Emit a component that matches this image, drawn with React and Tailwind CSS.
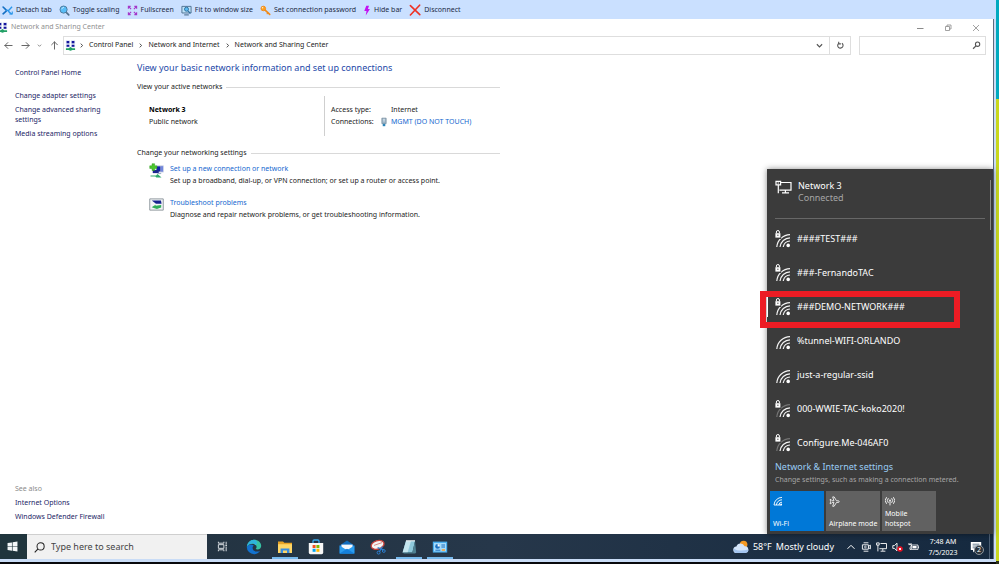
import React from "react";

function Icon({ box = "0 0 12 12", className = "", children }) {
  return (
    <svg viewBox={box} className={`shrink-0 ${className}`} fill="none" aria-hidden="true">
      {children}
    </svg>
  );
}

/* ---------- remote-session toolbar ---------- */

const DetachIcon = () => (
  <Icon className="size-[11px]">
    <path d="M1.2 2.2 4.4 5.4M1.2 9.6 4.6 6.6" stroke="#1670c4" strokeWidth="1.8" strokeLinecap="round" />
    <path d="M4.4 5.6 7.2 6 11 2M6.4 6.4 10.6 10" stroke="#2a96ea" strokeWidth="1.5" />
    <path d="M8 9.8h3.2V7" stroke="#2a96ea" strokeWidth="1.2" />
  </Icon>
);
const ScaleIcon = () => (
  <Icon className="size-[11px]">
    <path d="m7.6 7.8 3 3" stroke="#53708c" strokeWidth="1.8" strokeLinecap="round" />
    <circle cx="5" cy="5" r="3.9" fill="#58bdf7" stroke="#4b7799" />
    <path d="M3 4.6A2.4 2.4 0 0 1 5.400 2.600" stroke="#c6eaff" />
  </Icon>
);
const FullIcon = () => (
  <Icon className="size-[11px]">
    <path
      d="M1.500 4V1.500H4M1.500 1.500l3 3M8 1.500h2.500V4M10.500 1.500l-3 3M1.500 8v2.500H4M1.500 10.500l3-3M8 10.500h2.500V8M10.500 10.500l-3-3"
      stroke="#a436c9"
      strokeWidth="1.2"
    />
  </Icon>
);
const FitIcon = () => (
  <Icon className="size-[11px]">
    <path d="M1 1.500h10v7.200H1z" fill="#bfe3f8" stroke="#4b6f8e" />
    <path d="M3.500 10.800h5" stroke="#4b6f8e" strokeWidth="1.2" />
    <circle cx="6" cy="4.600" r="2.200" fill="#5bbcf2" stroke="#2d6c9c" />
    <path d="m7.600 6.300 2.600 2.900" stroke="#2d6c9c" strokeWidth="1.3" />
  </Icon>
);
const KeyIcon = () => (
  <Icon className="size-[11px]">
    <path d="m5 5 5.600 5.200" stroke="#ef8a1a" strokeWidth="1.8" strokeLinecap="round" />
    <path d="m8.600 8.600-1.200 1.300" stroke="#ef8a1a" strokeWidth="1.1" />
    <circle cx="3.600" cy="3.800" r="2.500" fill="#ff9f1e" stroke="#ef8a1a" />
    <circle cx="2.800" cy="3" r=".8" fill="#fff2d6" />
  </Icon>
);
const BoltIcon = () => (
  <Icon box="0 0 8 12" className="h-[11px] w-[8px]">
    <path d="M3.200.8h3L5 4.400h2.200L2.600 11.400l.9-4.800H1z" fill="#c312f2" />
  </Icon>
);
const CrossIcon = () => (
  <Icon className="size-[12px]">
    <path d="m1.400 1.600 9.400 9M10.600 1.200 1.400 11" stroke="#ee3124" strokeWidth="1.6" strokeLinecap="round" />
  </Icon>
);

const tools = [
  { label: "Detach tab", Glyph: DetachIcon },
  { label: "Toggle scaling", Glyph: ScaleIcon },
  { label: "Fullscreen", Glyph: FullIcon },
  { label: "Fit to window size", Glyph: FitIcon },
  { label: "Set connection password", Glyph: KeyIcon },
  { label: "Hide bar", Glyph: BoltIcon },
  { label: "Disconnect", Glyph: CrossIcon },
];

function SessionBar() {
  return (
    <header className="flex h-[19px] shrink-0 items-center gap-[7px] bg-[#cae0ff] pt-px pl-[2px]">
      {tools.map(({ label, Glyph }) => (
        <button key={label} type="button" className="flex items-center gap-[3px] whitespace-nowrap text-[#1c2b45]">
          <Glyph />
          {label}
        </button>
      ))}
    </header>
  );
}

/* ---------- control panel window ---------- */

const NetIcon = ({ className = "" }) => (
  <Icon className={`size-[11px] ${className}`}>
    <path d="M1 .6h4.400v3.600H1zM6.600.6H11v3.600H6.600zM1 4.800h4.400v3H1zM6.600 4.800H11v3H6.600z" fill="#c9d3ee" />
    <path d="M1.800 1h2.800v2.600H1.800zM7.400 1h2.800v2.600H7.400zM1.800 5.200h2.800v2.200H1.800zM7.400 5.200h2.800v2.200H7.400z" fill="#14149c" />
    <path d="M6 7.600 8 9h3v1.800H8.200L6 11.800l-2.200-1H1V9h3z" fill="#22a066" />
  </Icon>
);

const line = { strokeWidth: 1.1, strokeLinecap: "round", strokeLinejoin: "round" };

function TitleBar() {
  return (
    <div className="flex h-[17px] shrink-0 items-center pr-[13px] text-[#8f8f8f]">
      <NetIcon className="-ml-[3px]" />
      <span className="ml-[3px] flex-1">Network and Sharing Center</span>
      <div className="flex items-center gap-[20px]">
        <button type="button" aria-label="Minimize">
          <Icon box="0 0 8 8" className="size-[8px]"><path d="M1 4.500h6.500" stroke="#8a8a8a" /></Icon>
        </button>
        <button type="button" aria-label="Restore">
          <Icon box="0 0 8 8" className="size-[8px]"><path d="M1.500 2.500h4v4h-4zM3 2.500V1h4v4H5.500" stroke="#8a8a8a" strokeWidth=".8" /></Icon>
        </button>
        <button type="button" aria-label="Close">
          <Icon box="0 0 8 8" className="size-[8px]"><path d="m1 1 6 6M7 1 1 7" stroke="#8a8a8a" strokeWidth=".8" /></Icon>
        </button>
      </div>
    </div>
  );
}

function NavButton({ label, d }) {
  return (
    <button type="button" aria-label={label}>
      <Icon box="0 0 10 10" className="size-[9px]"><path d={d} stroke="#666" {...line} /></Icon>
    </button>
  );
}

const Chevron = () => (
  <Icon box="0 0 6 6" className="size-[5px]"><path d="m2 .8 2.400 2.200L2 5.200" stroke="#444" strokeWidth="1.1" /></Icon>
);

function AddressBar() {
  return (
    <div className="flex h-[19px] shrink-0 items-stretch pr-[7px] text-[#222]">
      <div className="flex w-[63px] shrink-0 items-center justify-between px-[4px]">
        <NavButton label="Back" d="M9 5H1M4.200 1.800 1 5l3.200 3.200" />
        <NavButton label="Forward" d="M1 5h8M5.800 1.800 9 5 5.800 8.200" />
        <button type="button" aria-label="Recent locations">
          <Icon box="0 0 6 6" className="size-[5px]"><path d="m1 2 2 2 2-2" stroke="#777" /></Icon>
        </button>
        <NavButton label="Up" d="M5 9V1M1.800 4.200 5 1l3.200 3.200" />
      </div>
      <div className="flex flex-1 items-center border border-[#dedede]">
        <NetIcon className="ml-px" />
        <nav className="ml-[3px] flex flex-1 items-center gap-[5px] whitespace-nowrap">
          <Chevron />
          <a href="#control-panel">Control Panel</a>
          <Chevron />
          <a href="#network">Network and Internet</a>
          <Chevron />
          <a href="#sharing">Network and Sharing Center</a>
        </nav>
        <button type="button" aria-label="Previous locations" className="mr-[6px]">
          <Icon box="0 0 8 8" className="size-[7px]"><path d="m1 2.600 3 3 3-3" stroke="#555" strokeWidth="1.3" /></Icon>
        </button>
        <button type="button" aria-label="Refresh" className="flex w-[21px] items-center justify-center self-stretch border-l border-[#dedede]">
          <Icon box="0 0 10 10" className="size-[9px]"><path d="M3 2.600a3 3 0 1 0 3.600-.1M3 .8v2.400h2.400" stroke="#555" strokeWidth="1.2" /></Icon>
        </button>
      </div>
      <label className="ml-[8px] flex w-[127px] items-center border border-[#dedede] px-[4px]">
        <input type="text" aria-label="Search Control Panel" className="w-0 flex-1 outline-none" />
        <Icon box="0 0 10 10" className="size-[9px]">
          <circle cx="6.200" cy="3.600" r="2.400" stroke="#555" strokeWidth="1.2" />
          <path d="M4.400 5.400 1.200 8.600" stroke="#555" strokeWidth="1.4" />
        </Icon>
      </label>
    </div>
  );
}

function Sidebar() {
  return (
    <aside className="flex w-[137px] shrink-0 flex-col pt-[13px] pr-[20px] pb-[12px] pl-[15px] text-[#1b2566]">
      <a href="#home" className="leading-[10px]">Control Panel Home</a>
      <a href="#adapter" className="mt-[13px] leading-[10px]">Change adapter settings</a>
      <a href="#advanced" className="mt-[4px] leading-[10px]">Change advanced sharing settings</a>
      <a href="#media" className="mt-[4px] leading-[10px]">Media streaming options</a>
      <div className="mt-auto flex flex-col gap-[4px] leading-[10px]">
        <span className="text-[#8a8a8a]">See also</span>
        <a href="#options">Internet Options</a>
        <a href="#firewall">Windows Defender Firewall</a>
      </div>
    </aside>
  );
}

function SectionTitle({ children }) {
  return (
    <h2 className="flex items-center gap-[4px] leading-[10px] text-[#222]">
      {children}
      <span className="h-px flex-1 bg-[#d9d9d9]" />
    </h2>
  );
}

const AddConnectionIcon = () => (
  <Icon box="0 0 16 16" className="size-[15px]">
    <path d="M8 2.600h7.600v7.400H8z" fill="#b9c3dc" />
    <path d="M8 3.600h4.200v5.400H8z" fill="#1223a8" />
    <path d="M12.800 3.400h2.200v5.800h-2.200z" fill="#7086dd" />
    <path d="M4 7.400h6.400v3.400H4z" fill="#1a2690" />
    <path d="M3.200.8h2.800v2.200h2.400v2.800H6V8H3.200V5.800H.8V3h2.400z" fill="#4cc72e" stroke="#2a981c" strokeWidth=".5" />
    <path d="M1.600 13.200h6L9 11.800l4.400 3.600H7.800l-1-1H1.600z" fill="#2ca86a" />
    <path d="M9 11.200h4" stroke="#9fb0c4" strokeWidth="1.2" />
  </Icon>
);
const TroubleshootIcon = () => (
  <Icon box="0 0 16 16" className="size-[15px]">
    <path d="M.8 2h14.400v12H.8z" fill="#f2f4f6" stroke="#8d959c" />
    <path d="M3 3.800h9.800l.6 3.400H7.400z" fill="#17238f" />
    <path d="M2.800 10.800 7 8.200v1.200l6-.8v2.600l-4.600 1.600z" fill="#2fae58" />
  </Icon>
);

const tasks = [
  {
    title: "Set up a new connection or network",
    text: "Set up a broadband, dial-up, or VPN connection; or set up a router or access point.",
    Glyph: AddConnectionIcon,
  },
  {
    title: "Troubleshoot problems",
    text: "Diagnose and repair network problems, or get troubleshooting information.",
    Glyph: TroubleshootIcon,
  },
];

function MainContent() {
  return (
    <main className="w-[363px] pt-[6px] text-[#222]">
      <h1 className="text-[9px] leading-[13px] whitespace-nowrap text-[#1d49a8]">
        View your basic network information and set up connections
      </h1>
      <div className="mt-[8px]"><SectionTitle>View your active networks</SectionTitle></div>
      <div className="mt-[4px] flex h-[40px] pl-[12px]">
        <div className="flex-1 pt-[8px] leading-[12px]">
          <p className="font-bold text-black">Network 3</p>
          <p>Public network</p>
        </div>
        <dl className="grid w-[176px] grid-cols-[60px_1fr] content-start border-l border-[#cfcfcf] pt-[8px] pl-[6px] leading-[12px]">
          <dt>Access type:</dt>
          <dd>Internet</dd>
          <dt className="flex items-center justify-between pr-[4px]">
            Connections:
            <Icon box="0 0 7 11" className="h-[10px] w-[6px]">
              <path d="M1 1h5v6.400H1z" fill="#9db4c6" stroke="#71889a" strokeWidth=".8" />
              <path d="M2.200 2.400h2.600M2.200 4.200h2.600" stroke="#e8f2f8" strokeWidth=".8" />
              <path d="M2 7.600h3v2.800H2z" fill="#2b83b8" />
            </Icon>
          </dt>
          <dd><a href="#mgmt" className="text-[#1568cf]">MGMT (DO NOT TOUCH)</a></dd>
        </dl>
      </div>
      <div className="mt-[12px]"><SectionTitle>Change your networking settings</SectionTitle></div>
      <ul className="mt-[5px] flex flex-col gap-[10px] pl-[12px]">
        {tasks.map(({ title, text, Glyph }) => (
          <li key={title} className="flex gap-[6px]">
            <Glyph />
            <div className="leading-[12px] whitespace-nowrap">
              <a href="#task" className="block text-[#1568cf]">{title}</a>
              <p>{text}</p>
            </div>
          </li>
        ))}
      </ul>
    </main>
  );
}

/* ---------- network flyout ---------- */

const Lock = () => (
  <>
    <path d="M-1-1h7.200v10H-1z" fill="#3b3b3b" />
    <path d="M.4 3.200h5v4.400h-5z" fill="#fff" />
    <path d="M1.400 3.200V2a1.500 1.500 0 0 1 3 0v1.200" stroke="#fff" />
    <path d="M2.900 4.600v1.400" stroke="#3b3b3b" strokeWidth=".9" />
  </>
);

function WifiSignal({ locked, weak }) {
  return (
    <Icon box="0 0 16 18" className="h-[18px] w-[16px]">
      <g strokeWidth="1.200">
        <path d="M1.800 17A13.400 13.400 0 0 1 15 4.600" stroke={weak ? "#757575" : "#f4f4f4"} />
        <path d="M5 17A10.400 10.400 0 0 1 15 7.800" stroke="#f4f4f4" />
        <path d="M8.200 17A7.200 7.200 0 0 1 15 11" stroke="#f4f4f4" />
      </g>
      <circle cx="13.200" cy="15.400" r="1.800" fill="#fff" />
      {locked && <Lock />}
    </Icon>
  );
}

const networks = [
  { name: "####TEST###", locked: true },
  { name: "###-FernandoTAC", locked: true },
  { name: "###DEMO-NETWORK###", locked: true, marked: true },
  { name: "%tunnel-WIFI-ORLANDO" },
  { name: "just-a-regular-ssid" },
  { name: "000-WWIE-TAC-koko2020!", locked: true, weak: true },
  { name: "Configure.Me-046AF0", locked: true, weak: true },
];

function Tile({ label, active, children }) {
  return (
    <button
      type="button"
      aria-pressed={active}
      className={`flex h-[40px] w-[54px] flex-col items-start justify-between pt-[5px] pb-[2px] pl-[3px] text-left text-[7px] leading-[10px] text-white ${active ? "bg-[#0078d7]" : "bg-[#616161]"}`}
    >
      {children}
      <span className="whitespace-pre">{label}</span>
    </button>
  );
}

function NetworkFlyout() {
  return (
    <section
      aria-label="Networks"
      className="absolute right-0 bottom-0 flex w-[226px] flex-col bg-[#3b3b3b] text-[9px] text-white shadow-[0_0_6px_rgba(0,0,0,0.45)]"
    >
      <span className="absolute top-[11px] right-[2px] h-[50px] w-px bg-[#8a8a8a]" />
      <div className="mx-[8px] flex h-[50px] gap-[6px] border-b border-[#676767] pt-[11px]">
        <Icon box="0 0 17 14" className="h-[14px] w-[17px]">
          <path d="M6 2.500h10v7.600H4.400" stroke="#fff" strokeWidth="1.200" />
          <path d="M10.400 10v2.600M7 12.900h7" stroke="#fff" strokeWidth="1.200" />
          <path d="M1 1.400h4.600v3.400H1z" stroke="#fff" strokeWidth="1.200" />
          <path d="M3.300 4.800v8.400" stroke="#fff" strokeWidth="1.200" />
          <path d="M2.600 3h1.400" stroke="#fff" />
        </Icon>
        <div className="leading-[12px]">
          <p>Network 3</p>
          <p className="text-[#a6a6a6]">Connected</p>
        </div>
      </div>
      <ul className="mt-[3px]">
        {networks.map((n) => (
          <li key={n.name} className="relative">
            <button type="button" className="flex h-[34px] w-full items-center gap-[6px] pl-[8px]">
              <WifiSignal locked={n.locked} weak={n.weak} />
              {n.name}
            </button>
            {n.marked && (
              <>
                <span className="absolute top-[7px] left-0 h-[20px] w-px bg-white" />
                <span className="absolute top-px -bottom-1 -left-[7px] w-[200px] border-[6px] border-[#ed1c24]" />
              </>
            )}
          </li>
        ))}
      </ul>
      <div className="pl-[8px]">
        <a href="#settings" className="block leading-[14px] text-[#99ccf5]">Network &amp; Internet settings</a>
        <p className="text-[7px] leading-[11px] whitespace-nowrap text-[#a6a6a6]">
          Change settings, such as making a connection metered.
        </p>
      </div>
      <div className="flex gap-[2px] pt-[6px] pb-[3px] pl-[3px]">
        <Tile label="Wi-Fi" active>
          <Icon box="0 0 10 10" className="size-[10px]">
            <path d="M1 9a8 8 0 0 1 8-7.600M3.400 9A5.600 5.600 0 0 1 9 3.800M5.800 9A3.200 3.200 0 0 1 9 6.200M1 9h7.600" stroke="#fff" strokeWidth=".9" />
            <circle cx="8.200" cy="8.400" r=".9" fill="#fff" />
          </Icon>
        </Tile>
        <Tile label="Airplane mode">
          <Icon className="size-[11px]">
            <path
              d="M1.200 3.800h1l1.200 1.400h2L4 1h1.600l2.600 4.200h2a.9.9 0 0 1 0 1.800h-2l-2.600 4.200H4L5.400 7h-2L2.200 8.400h-1l.6-2.300z"
              stroke="#fff"
              strokeWidth=".9"
            />
          </Icon>
        </Tile>
        <Tile label={"Mobile\nhotspot"}>
          <Icon box="0 0 10 10" className="size-[10px]">
            <path d="M1.600 1.200a5 5 0 0 0 0 6.600M3.400 2.200a3.400 3.400 0 0 0 0 4.600M8.400 1.200a5 5 0 0 1 0 6.600M6.600 2.200a3.400 3.400 0 0 1 0 4.600M5 4.400V9.400" stroke="#fff" strokeWidth=".9" />
            <circle cx="5" cy="4.400" r=".8" fill="#fff" />
          </Icon>
        </Tile>
      </div>
    </section>
  );
}

/* ---------- taskbar ---------- */

const apps = [
  {
    label: "Microsoft Edge",
    art: (
      <>
        <path d="M8 .8A7.200 7.200 0 0 0 .8 8c2-4 7.600-4.400 9.400-1.400.9 1.600 0 2.800-.6 3.400 3 1.200 5.600-.4 5.600-3C15.200 3.400 12 .8 8 .8z" fill="#36c2a4" />
        <path d="M8 .8A7.200 7.200 0 0 0 .8 8c2-4 7-4.400 9-1.800C12 4 11 1.400 8 .8z" fill="#2fb3dc" />
        <path d="M.8 8A7.200 7.200 0 0 0 8 15.200c2.600 0 4.800-1.200 6-3.200-3 1.400-7.400.4-7.400-3 0-1.200.6-2 1.200-2.400C5 4.400 1.800 5.400.8 8z" fill="#1272cf" />
      </>
    ),
  },
  {
    label: "File Explorer",
    running: true,
    art: (
      <>
        <path d="M1 2.400h5l1.400 1.400H15v10.200H1z" fill="#e8a325" />
        <path d="M1 5.200h14v8.800H1z" fill="#ffd666" />
        <path d="M3.600 14V9.400h8.800V14H10v-2.400H6V14z" fill="#3a8ee0" />
      </>
    ),
  },
  {
    label: "Microsoft Store",
    art: (
      <>
        <path d="M5 4V2.200A1.200 1.200 0 0 1 6.200 1h3.600A1.200 1.200 0 0 1 11 2.200V4" stroke="#38a9ea" strokeWidth="1.3" />
        <path d="M.8 4h14.400v9.600a1.600 1.600 0 0 1-1.600 1.600H2.400A1.600 1.600 0 0 1 .8 13.600z" fill="#f7f7f7" />
        <path d="M4.600 6h3v3h-3z" fill="#f25022" />
        <path d="M8.400 6h3v3h-3z" fill="#7fba00" />
        <path d="M4.600 9.800h3v3h-3z" fill="#00a4ef" />
        <path d="M8.400 9.800h3v3h-3z" fill="#ffb900" />
      </>
    ),
  },
  {
    label: "Mail",
    art: (
      <>
        <path d="M.6 6.400 8 1.400l7.400 5v8H.6z" fill="#0f6cbd" />
        <path d="M2.400 5.600h11.200v5H2.400z" fill="#f3f8fc" />
        <path d="M.6 6.400 8 11.200l7.400-4.800v8H.6z" fill="#2b9df0" />
        <path d="M.6 14.400 8 9.800l7.400 4.600z" fill="#1580dc" />
      </>
    ),
  },
  {
    label: "Snipping Tool",
    art: (
      <>
        <ellipse cx="7.600" cy="5.800" rx="6.600" ry="4.200" fill="#f4f4f4" stroke="#c8423c" strokeWidth="1.300" transform="rotate(-18 7.600 5.800)" />
        <path d="m4 6.400 8-2.800" stroke="#d98a86" />
        <path d="M7.600 8.600 14 11M12.400 7.600 9.200 13" stroke="#2d7fd0" strokeWidth="1.200" />
        <circle cx="8.600" cy="13.600" r="1.500" stroke="#2d7fd0" />
        <circle cx="13.800" cy="12" r="1.400" stroke="#2d7fd0" />
      </>
    ),
  },
  {
    label: "Notepad",
    running: true,
    art: (
      <>
        <path d="M5 2h9l-2.600 11.400H1.600z" fill="#8ec9dc" />
        <path d="M5 2h5L6.600 13.400h-5z" fill="#c5e6ef" />
        <path d="M11.400 13.400 14 2l1.200 11.400-1 1H3l-1.400-1z" fill="#4f8192" />
        <path d="M5 1.800h9" stroke="#e8eef0" strokeWidth="1.200" />
      </>
    ),
  },
  {
    label: "Control Panel",
    running: true,
    art: (
      <>
        <path d="M.8 2.600h14.400v11H.8z" fill="#49aef0" />
        <path d="M2 4h12v8.400H2z" fill="#a5dbfb" />
        <circle cx="5.600" cy="7.400" r="2.400" fill="#1c6fc0" />
        <path d="M5.600 7.400V5A2.400 2.400 0 0 1 8 7.400z" fill="#fff" />
        <path d="M9.400 6H13M9.400 8H13" stroke="#1c6fc0" />
        <path d="M3.400 11.200h5" stroke="#1c6fc0" />
        <path d="M9.800 10.200H13v1.600H9.800z" fill="#f5a23a" />
      </>
    ),
  },
];

function Taskbar() {
  return (
    <footer className="flex h-[25px] shrink-0 items-stretch bg-linear-to-r from-[#22323d] via-[#26374a] to-[#15293f] text-white">
      <button type="button" aria-label="Start" className="flex w-[27px] items-center justify-center bg-[#20353d] pr-[3px]">
        <Icon className="size-[11px]">
          <path d="M.6 2.200 5.400 1.500v4.200H.6zM6.100 1.400 11.400.6v5.100H6.100zM.6 6.400h4.800v4.200L.6 9.900zM6.100 6.400h5.300v5.100l-5.300-.8z" fill="#f4f8fa" />
        </Icon>
      </button>
      <label className="flex w-[180px] items-center gap-[6px] border-t border-[#cfcfcf] bg-[#f1f1f1] pl-[7px]">
        <Icon className="size-[11px]">
          <circle cx="7.200" cy="4.800" r="3.900" stroke="#222" strokeWidth="1.100" />
          <path d="M4.400 7.600.8 11.400" stroke="#222" strokeWidth="1.200" />
        </Icon>
        <input
          type="text"
          aria-label="Search"
          placeholder="Type here to search"
          className="w-0 flex-1 text-[9px] outline-none placeholder:text-[#444]"
        />
      </label>
      <div className="flex items-stretch pl-[3px]">
        <button type="button" aria-label="Task view" className="flex w-[25px] items-center justify-center">
          <Icon className="size-[11px]">
            <path d="M1.500.8v1.600h6V.8M1.500 4h6v4h-6zM1.500 11.200V9.600h6v1.600M10 .8v3M10 6.400v4.800" stroke="#e6eaee" />
            <path d="M9.200 4.200h1.600v1.600H9.200z" fill="#e6eaee" />
          </Icon>
        </button>
        <div className="ml-[6px] flex gap-[5px]">
          {apps.map(({ label, running, art }) => (
            <button
              key={label}
              type="button"
              aria-label={label}
              className={`flex w-[26px] items-center justify-center border-b-2 pt-[2px] ${running ? "border-[#76b9ed]" : "border-transparent"}`}
            >
              <Icon box="0 0 16 16" className="size-[16px]">{art}</Icon>
            </button>
          ))}
        </div>
      </div>
      <div className="ml-auto flex items-stretch">
        <button type="button" className="flex items-center gap-[4px] text-[9px] whitespace-nowrap">
          <Icon box="0 0 16 14" className="h-[14px] w-[16px]">
            <circle cx="10.600" cy="4.600" r="3.800" fill="#f59a23" />
            <path d="M3.600 13a3.200 3.200 0 0 1-.2-6.400 4.400 4.400 0 0 1 8.200-.4A3.400 3.400 0 1 1 12.200 13z" fill="#d5e6fa" />
            <path d="M3.600 13a3.200 3.200 0 0 1-2.600-4.600c3 2.600 8 2.800 14.400 1.200A3.400 3.400 0 0 1 12.200 13z" fill="#a4c5f0" />
          </Icon>
          <span>58°F</span>
          <span>Mostly cloudy</span>
        </button>
        <div className="ml-[12px] flex items-center gap-[5px]">
          <button type="button" aria-label="Show hidden icons">
            <Icon box="0 0 10 10" className="size-[10px]"><path d="m1.500 6.800 3.500-3.500 3.500 3.500" stroke="#fff" /></Icon>
          </button>
          <button type="button" aria-label="Meet now">
            <Icon box="0 0 10 10" className="size-[10px]">
              <path d="M2.600.8h4.800M2.600 9.200h4.800M1.400 2.800h6v4.400h-6zM7.400 4.400 9.400 3.200v3.600L7.400 5.600" stroke="#fff" strokeWidth=".9" />
              <circle cx="4.400" cy="5" r=".9" stroke="#fff" strokeWidth=".7" />
            </Icon>
          </button>
          <button type="button" aria-label="Network">
            <Icon box="0 0 11 10" className="h-[10px] w-[11px]"><path d="M4.500 1.500h6v5.200H3.400M6.800 6.800v2M4.600 9.200h4.800M.6.900h2.600v2.200H.6zM1.900 3v6.400" stroke="#fff" strokeWidth=".9" /></Icon>
          </button>
          <button type="button" aria-label="Volume muted">
            <Icon box="0 0 11 10" className="h-[10px] w-[11px]">
              <path d="M.8 3.600h1.600L5 1.200v7.600L2.400 6.400H.8z" stroke="#fff" strokeWidth=".9" />
              <circle cx="8" cy="7" r="2.800" fill="#e81123" />
              <path d="m7 6 2 2M9 6 7 8" stroke="#fff" strokeWidth=".9" />
            </Icon>
          </button>
          <button type="button" aria-label="Battery">
            <Icon box="0 0 11 10" className="h-[10px] w-[11px]">
              <path d="M3.400 3h6.600v4.400H3.400z" stroke="#fff" strokeWidth=".8" />
              <path d="M4.400 4h4.200v2.400H4.400z" fill="#fff" />
              <path d="M10.600 4.400v1.800M1 1v1.400M3 1v1.400M.6 2.600h2.800v1.600L2 5.400v2h1.400" stroke="#fff" strokeWidth=".9" />
            </Icon>
          </button>
        </div>
        <time className="ml-[8px] w-[32px] self-center text-center leading-[11px] whitespace-nowrap">
          7:48 AM
          <br />
          7/5/2023
        </time>
        <button type="button" aria-label="2 notifications" className="relative mr-[7px] ml-[11px] flex self-center">
          <Icon className="size-[12px]">
            <path d="M.8 1h10.400v8H5l-2 2.400V9H.8z" fill="#fff" />
            <path d="M2.600 3.200h6.800M2.600 5h6.800M2.600 6.800h4" stroke="#35506a" strokeWidth=".7" />
          </Icon>
          <span className="absolute top-[4px] left-[4px] flex size-[10px] items-center justify-center rounded-full border border-[#8e979f] bg-[#2c333b] text-[7px] leading-none">
            2
          </span>
        </button>
        <button type="button" aria-label="Show desktop" className="w-[4px] border-l border-[#4d5f74]" />
      </div>
    </footer>
  );
}

export default function App() {
  return (
    <div className="flex h-screen overflow-hidden bg-black font-['Noto_Sans','Open_Sans',sans-serif] text-[7px]">
      <div className="flex min-w-0 flex-1 flex-col">
        <SessionBar />
        <div className="flex min-h-0 flex-1 border-b-3 border-[#c9dcf6] bg-white">
          <div className="flex min-w-0 flex-1 flex-col">
            <div className="relative flex min-h-0 flex-1 flex-col bg-white">
              <TitleBar />
              <AddressBar />
              <div className="flex min-h-0 flex-1">
                <Sidebar />
                <MainContent />
              </div>
              <NetworkFlyout />
            </div>
            <Taskbar />
          </div>
          <div className="w-px bg-[#5c6b80]" />
          <div className="w-[2px] bg-[#cbdcf5]" />
        </div>
        <div className="h-[2px] shrink-0 bg-[#08080c]" />
      </div>
      <div className="flex w-[3px] shrink-0 flex-col">
        <div className="h-[99px] bg-[#00a9bf]" />
        <div className="flex-1 bg-[#c8d820]" />
        <div className="h-[3px] bg-[#2c3018]" />
      </div>
    </div>
  );
}
